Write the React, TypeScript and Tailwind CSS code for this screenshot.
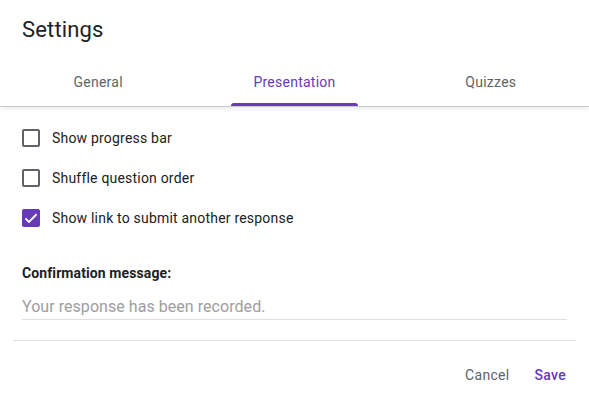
import React, { useState } from 'react';

const tabs = ['General', 'Presentation', 'Quizzes'];

const options = [
  { id: 'progress', label: 'Show progress bar', checked: false },
  { id: 'shuffle', label: 'Shuffle question order', checked: false },
  { id: 'link', label: 'Show link to submit another response', checked: true },
];

const Checkbox: React.FC<{ checked: boolean }> = ({ checked }) =>
  checked ? (
    <div className="w-[18px] h-[18px] rounded-[2px] bg-[#673ab7] flex items-center justify-center">
      <svg width="18" height="18" viewBox="0 0 24 24" fill="none">
        <path d="M4.5 12.5l4.8 4.8L19.5 7" stroke="#fff" strokeWidth="2.4" />
      </svg>
    </div>
  ) : (
    <div className="w-[18px] h-[18px] rounded-[2px] border-2 border-[#5f6368]" />
  );

const App: React.FC = () => {
  const [active] = useState('Presentation');

  return (
    <div className="w-[589px] h-[406px] bg-white font-['Roboto',sans-serif] flex flex-col">
      {/* Header with tabs */}
      <div className="relative z-10 shadow-[0_1px_0_rgba(0,0,0,0.14),0_2px_5px_rgba(0,0,0,0.1)]">
        <h1 className="px-[22px] pt-[16px] mb-[14px] text-[22px] leading-[28px] font-normal tracking-[0.15px] text-[#202124]">Settings</h1>
        <div className="grid grid-cols-3 h-[48px]">
          {tabs.map(tab => (
            <div key={tab} className="flex justify-center h-full">
              <div
                className={`relative h-full px-[22px] flex items-center text-[14px] tracking-[0.25px] ${
                  tab === active ? 'text-[#673ab7]' : 'text-[#5f6368]'
                }`}
              >
                {tab}
                {tab === active && (
                  <div className="absolute left-0 right-0 bottom-0 h-[3px] rounded-t-[3px] bg-[#673ab7]" />
                )}
              </div>
            </div>
          ))}
        </div>
      </div>

      {/* Options */}
      <div className="pt-[12px] px-[22px]">
        {options.map(opt => (
          <div key={opt.id} className="h-[40px] flex items-center gap-[12px]">
            <Checkbox checked={opt.checked} />
            <span className="text-[14px] tracking-[0.2px] text-[#202124]">{opt.label}</span>
          </div>
        ))}
      </div>

      <div className="px-[22px] mt-[25px]">
        <div className="text-[14px] leading-[20px] font-bold tracking-[0.1px] text-[#202124]">Confirmation message:</div>
        <div className="mt-[12px] border-b border-[#e0e0e0] text-[16px] leading-[24px] tracking-[0.05px] text-[#9e9e9e]">
          Your response has been recorded.
        </div>
      </div>

      <div className="mx-[13px] mt-[20px] border-t border-[#e0e0e0]" />

      <div className="flex justify-end items-center gap-[25px] pr-[23px] mt-[24px] text-[14px] leading-[20px] tracking-[0.3px]">
        <button className="text-[#5f6368]">Cancel</button>
        <button className="text-[#673ab7] font-medium">Save</button>
      </div>
    </div>
  );
};

export default App;
